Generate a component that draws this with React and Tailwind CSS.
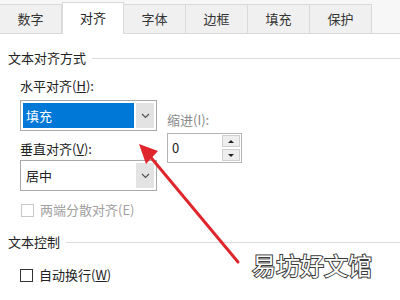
import React from "react";

const tabs = ["数字", "对齐", "字体", "边框", "填充", "保护"];

function Chevron() {
    return (
        <svg width="9" height="6" viewBox="0 0 9 6" fill="none">
            <path d="M1 1 L4.5 4.5 L8 1" stroke="#555" strokeWidth="1.2" />
        </svg>
    );
}

function Combo({ value, selected }) {
    return (
        <div className="flex h-[31px] w-[137px] border border-[#a9a9a9] bg-white p-[2px]">
            <div
                className={
                    selected
                        ? "flex flex-1 items-center bg-[#0078d7] pl-[3px] text-white"
                        : "flex flex-1 items-center pl-[3px] text-[#222]"
                }
            >
                {value}
            </div>
            <div className="ml-[2px] flex w-[18px] items-center justify-center bg-[#e3e3e3]">
                <Chevron />
            </div>
        </div>
    );
}

function Checkbox({ label, disabled }) {
    return (
        <div className={disabled ? "flex items-center gap-[6px] text-[#a0a0a0]" : "flex items-center gap-[6px] text-[#222]"}>
            <div className={disabled ? "h-[13px] w-[13px] border border-[#c8c8c8] bg-white" : "h-[13px] w-[13px] border border-[#333] bg-white"} />
            <span>{label}</span>
        </div>
    );
}

function SectionTitle({ text }) {
    return (
        <div className="flex items-center gap-[6px] pl-[8px]">
            <span className="text-[#222]">{text}</span>
            <div className="h-px flex-1 bg-[#dcdcdc]" />
        </div>
    );
}

export default function App() {
    return (
        <div className="relative h-[300px] w-[400px] overflow-hidden bg-white text-[13px] leading-[16px] [font-family:'Noto_Sans_CJK_SC',sans-serif]">
            {/* tab strip */}
            <div className="flex h-[34px] items-end border-b border-[#d9d9d9] bg-[#f7f7f7]">
                {tabs.map((t, i) =>
                    i === 1 ? (
                        <div key={t} className="-mb-px flex h-[32px] w-[62px] items-center justify-center border-x border-t border-[#d9d9d9] bg-white pb-[2px] text-[#222]">
                            {t}
                        </div>
                    ) : (
                        <div key={t} className="flex h-[29px] w-[62px] items-center justify-center border-t border-r border-[#d9d9d9] bg-[#f0f0f0] text-[#333]">
                            {t}
                        </div>
                    )
                )}
            </div>

            <div className="pt-[16px]">
                <SectionTitle text="文本对齐方式" />

                <div className="mt-[12px] flex pl-[20px]">
                    <div className="flex flex-col">
                        <span className="text-[#222]">
                            水平对齐(<span className="underline">H</span>):
                        </span>
                        <div className="mt-[6px]">
                            <Combo value="填充" selected />
                        </div>
                        <span className="mt-[10px] text-[#222]">
                            垂直对齐(<span className="underline">V</span>):
                        </span>
                        <div className="mt-[3px]">
                            <Combo value="居中" />
                        </div>
                    </div>
                    <div className="ml-[10px] mt-[34px] flex flex-col">
                        <span className="text-[#8a8a8a]">缩进(I):</span>
                        <div className="mt-[5px] flex h-[30px] w-[75px] border border-[#b4b4b4] bg-white">
                            <div className="flex flex-1 items-center pl-[4px] text-[#222]">0</div>
                            <div className="my-[1px] mr-[1px] flex w-[18px] flex-col gap-[2px]">
                                <div className="flex flex-1 items-center justify-center border border-[#cfcfcf] bg-[#eeeeee]">
                                    <div className="h-0 w-0 border-x-[3px] border-b-[3px] border-x-transparent border-b-[#222]" />
                                </div>
                                <div className="flex flex-1 items-center justify-center border border-[#cfcfcf] bg-[#eeeeee]">
                                    <div className="h-0 w-0 border-x-[3px] border-t-[3px] border-x-transparent border-t-[#222]" />
                                </div>
                            </div>
                        </div>
                    </div>
                </div>

                <div className="mt-[11px] pl-[21px]">
                    <Checkbox label="两端分散对齐(E)" disabled />
                </div>

                <div className="mt-[16px]">
                    <SectionTitle text="文本控制" />
                </div>

                <div className="mt-[17px] pl-[20px]">
                    <Checkbox
                        label={
                            <>
                                自动换行(<span className="underline">W</span>)
                            </>
                        }
                    />
                </div>
            </div>

            {/* red annotation arrow */}
            <svg className="pointer-events-none absolute inset-0" width="400" height="300" viewBox="0 0 400 300">
                <line x1="238" y1="262" x2="148" y2="154" stroke="#e0262d" strokeWidth="3" strokeLinecap="round" />
                <polygon points="139,144 158,151 146,164" fill="#e0262d" />
            </svg>

            {/* watermark */}
            <div className="pointer-events-none absolute left-[252px] top-[250px] text-[24px] leading-[30px] text-white [font-family:'Noto_Sans_CJK_SC',sans-serif] [-webkit-text-stroke:2px_#3a3a3a] [paint-order:stroke_fill]">
                易坊好文馆
            </div>
        </div>
    );
}
